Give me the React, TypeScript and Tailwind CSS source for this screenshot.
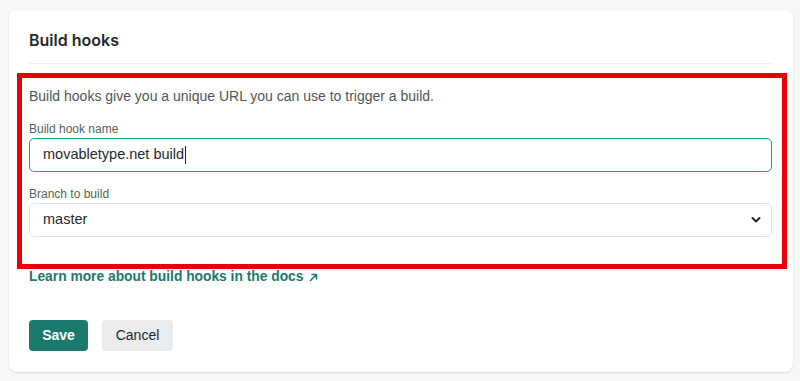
import React from "react";

export default function App() {
  return (
    <div
      className="w-[800px] h-[381px] bg-[#f5f7f8] pl-[9px] pr-[7px] pt-[10px] overflow-hidden"
      style={{ fontFamily: "'Liberation Sans', Arial, sans-serif" }}
    >
      <div className="relative bg-white rounded-[8px] shadow-[0_1px_2px_rgba(0,0,0,0.12)] pl-[20px] pr-[21px] pt-[18px] pb-[21px]">
        <h2 className="text-[16px] leading-[24px] font-semibold text-[#1e2a2e] font-['Inter',sans-serif]">Build hooks</h2>
        <div className="mt-[11px] h-px bg-[#eef1f2]" />
        <p className="mt-[22px] text-[14px] leading-[20px] text-[#4d575b]">
          Build hooks give you a unique URL you can use to trigger a build.
        </p>
        <label className="block mt-[15px] text-[12px] leading-[16px] text-[#545f62]">Build hook name</label>
        <div className="mt-px h-[34px] rounded-[5px] border-[1.5px] border-[#1f9e8e] flex items-center pl-[13px] text-[14.5px] text-[#1e2a2e]">
          movabletype.net build
          <span className="inline-block w-px h-[18px] bg-[#1e2a2e] ml-px" />
        </div>
        <label className="block mt-[14px] text-[12px] leading-[16px] text-[#545f62]">Branch to build</label>
        <div className="mt-px h-[34px] rounded-[5px] border border-[#e2e5e6] flex items-center justify-between pl-[13px] pr-[10px] text-[14.5px] text-[#1e2a2e]">
          <span>master</span>
          <svg width="10" height="8" viewBox="0 0 10 8" fill="none">
            <path d="M1.5 2 L5 5.5 L8.5 2" stroke="#1e2a2e" strokeWidth="2" strokeLinecap="round" strokeLinejoin="round" />
          </svg>
        </div>
        <a className="mt-[30px] flex items-center gap-[6px] text-[13.8px] leading-[20px] font-bold text-[#197a6f]">
          Learn more about build hooks in the docs
          <svg width="9" height="9" viewBox="0 0 9 9" fill="none">
            <path d="M1.5 7.5 L7.5 1.5 M3 1.5 H7.5 V6" stroke="#197a6f" strokeWidth="1.5" strokeLinecap="round" strokeLinejoin="round" />
          </svg>
        </a>
        <div className="mt-[33px] flex gap-[14px]">
          <button className="h-[31px] w-[59px] rounded-[4px] bg-[#1b7a6d] text-white text-[14px] font-bold">Save</button>
          <button className="h-[31px] w-[71px] rounded-[4px] bg-[#e9ebed] text-[#1e2a2e] text-[14px]">Cancel</button>
        </div>
        <div className="absolute left-[8px] top-[63px] w-[770px] h-[196px] border-[5px] border-[#e60008] pointer-events-none" />
      </div>
    </div>
  );
}
